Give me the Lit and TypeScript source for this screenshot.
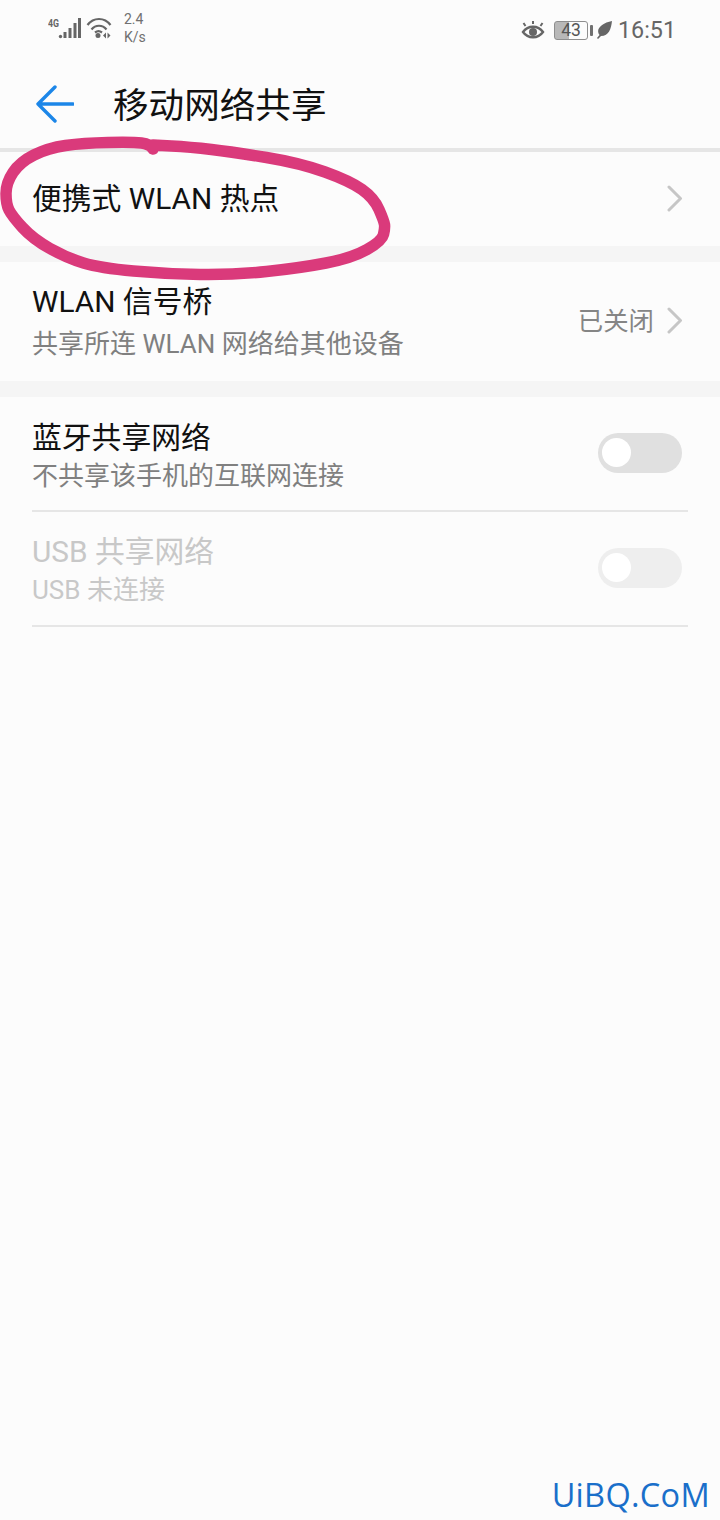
import { LitElement, html, css, svg } from "lit";
import { customElement } from "lit/decorators.js";

const chevron = html`<svg class="chev" width="16" height="27" viewBox="0 0 16 27"><path d="M2 2 L13.500 13.500 L2 25" fill="none" stroke="#c6c6c6" stroke-width="3" stroke-linecap="round" stroke-linejoin="round"/></svg>`;

const toggle = (off: boolean) => html`<div class="track ${off ? "off" : ""}"><div class="knob"></div></div>`;

const inkPoints: [number, number][] = [
  [153, 149], [150, 144], [133, 142], [83, 143], [48, 148], [20, 162], [6, 183], [6, 204], [12, 216],
  [33, 239], [67, 258], [100, 268], [167, 274], [233, 275], [300, 268], [352, 258], [382, 241],
  [385, 228], [384, 221], [374, 198], [350, 181], [300, 163], [233, 152], [190, 147], [153, 145],
];

function smooth(pts: [number, number][]): string {
  let d = `M${pts[0][0]} ${pts[0][1]}`;
  for (let i = 1; i < pts.length - 1; i++) {
    const mx = (pts[i][0] + pts[i + 1][0]) / 2;
    const my = (pts[i][1] + pts[i + 1][1]) / 2;
    d += ` Q${pts[i][0]} ${pts[i][1]} ${mx} ${my}`;
  }
  const last = pts[pts.length - 1];
  return d + ` L${last[0]} ${last[1]}`;
}

@customElement("app-root")
export class AppRoot extends LitElement {
  static styles = css`
    :host { display: block; position: relative; width: 720px; height: 1520px; overflow: hidden; background: #fcfcfc;
      font-family: Roboto, "Noto Sans CJK SC", sans-serif; color: #000; }
    .status { height: 60px; box-sizing: border-box; display: flex; align-items: flex-start; padding: 12px 44px 0 48px; color: #666; }
    .status svg { display: block; flex: none; }
    .speed { margin: -2px 0 0 11px; font-size: 14px; line-height: 18px; color: #707070; width: 30px; }
    .speed div { height: 18px; }
    .spacer { flex: 1; }
    .right { display: flex; align-items: center; height: 34px; margin-top: 1px; }
    .batt { width: 32px; height: 17px; border: 1.5px solid #8e8e8e; border-radius: 3px; margin-left: 9px; background: linear-gradient(90deg, #b8b8b8 0 45%, transparent 45%); font-size: 17.5px; line-height: 17px; text-align: center; color: #555; }
    .tip { width: 3px; height: 11px; background: #707070; margin: 0 3px 0 2px; border-radius: 1px; }
    .time { font-size: 23.3px; color: #666; margin-left: 5px; line-height: 34px; }
    .bar { height: 88px; display: flex; align-items: center; padding-left: 36px; border-bottom: 4px solid #e6e6e6; }
    .bar svg { flex: none; }
    h1 { margin: 4px 0 0 39px; font-size: 35.6px; font-weight: 400; line-height: 48px; color: #111; }
    .row { display: flex; align-items: center; padding: 0 37px 0 32px; box-sizing: border-box; }
    .main { flex: 1; min-width: 0; }
    .title { font-size: 29.8px; line-height: 40px; color: #111; }
    .sub { font-size: 26px; line-height: 36px; color: #808080; }
    .value { font-size: 25.4px; color: #858585; margin: -5px 13px 0 0; }
    .hot { height: 94px; }
    .hot .chev { margin-top: -1px; }
    .bridge { height: 119px; }
    .bridge .sub { margin-top: 4px; }
    .bridge .chev { margin-top: -3px; }
    .gap { height: 16px; background: #f5f5f5; }
    .sw { height: 113px; padding-right: 38px; }
    .sw .main { margin-top: 4px; }
    .sw.dis .main { margin-top: 2px; }
    .line { height: 2px; margin: 0 32px; background: #e6e6e6; }
    .dis .title, .dis .sub { color: #c8c8c8; }
    .track { width: 84px; height: 40px; border-radius: 20px; background: #e0e0e0; position: relative; flex: none; margin-top: -2px; }
    .track.off { background: #eeeeee; }
    .knob { position: absolute; left: 4px; top: 5px; width: 29px; height: 29px; border-radius: 50%; background: #fff; }
    .ink { position: absolute; left: 0; top: 0; pointer-events: none; }
    .mark { position: absolute; right: 10px; bottom: 3px; font-family: "Open Sans", sans-serif; font-size: 32.5px; font-weight: 500; line-height: 44px; color: #1a6fca; letter-spacing: 0.3px; }
  `;

  render() {
    return html`
      <div class="status">
        <svg width="65" height="30" viewBox="0 0 65 30">
          <text x="0" y="15" font-family="Roboto, sans-serif" font-size="11.500" font-weight="700" fill="#666" textLength="11" lengthAdjust="spacingAndGlyphs">4G</text>
          <circle cx="12.500" cy="24.500" r="1.700" fill="#666"/>
          ${[[15.5, 20, 3, 6], [20.5, 16, 3, 10], [25.5, 11, 3, 15], [30, 6, 3, 20]].map(
            ([x, y, w, h]) => svg`<rect x=${x} y=${y} width=${w} height=${h} fill="#666"/>`
          )}
          <g fill="none" stroke="#666" stroke-width="2.200">
            <path d="M39.500 13 C45.500 5 56.500 5 62.500 13"/>
            <path d="M43.500 17.500 C47.500 12.500 54.500 12.500 58.500 17.500"/>
            <path d="M47 20.500 C49 19 52 19 54 20.500"/>
          </g>
          <circle cx="50" cy="23.500" r="2.500" fill="#666"/>
          <path d="M58 20.500 L55 23.500 L58 26.500Z M59.500 20.500 L62.500 23.500 L59.500 26.500Z" fill="#666"/>
        </svg>
        <div class="speed"><div>2.4</div><div>K/s</div></div>
        <div class="spacer"></div>
        <div class="right">
          <svg width="24" height="20" viewBox="0 0 24 20">
            <path d="M2 12 C7 5 17 5 22 12 C17 19 7 19 2 12Z" fill="none" stroke="#666" stroke-width="2.400"/>
            <circle cx="12" cy="12" r="4" fill="#666"/>
            <path d="M4.500 6 L2.500 3 M12 4 L12 1 M19.500 6 L21.500 3" stroke="#666" stroke-width="2"/>
          </svg>
          <div class="batt">43</div>
          <div class="tip"></div>
          <svg width="17" height="18" viewBox="0 0 17 18"><path d="M16 0 C15 8 13 15 5 15 L2 18 L1 17 L3.500 14 C-1 8 6 2 16 0Z" fill="#666"/></svg>
          <div class="time">16:51</div>
        </div>
      </div>

      <div class="bar">
        <svg width="38" height="38" viewBox="0 0 38 38"><path d="M19 2 L2 19 L19 36 M2 19 L37 19" fill="none" stroke="#1c86e8" stroke-width="3.400" stroke-linecap="round" stroke-linejoin="round"/></svg>
        <h1>移动网络共享</h1>
      </div>

      <div class="row hot">
        <div class="main"><div class="title">便携式 WLAN 热点</div></div>
        ${chevron}
      </div>
      <div class="gap"></div>
      <div class="row bridge">
        <div class="main">
          <div class="title">WLAN 信号桥</div>
          <div class="sub">共享所连 WLAN 网络给其他设备</div>
        </div>
        <div class="value">已关闭</div>
        ${chevron}
      </div>
      <div class="gap"></div>
      <div class="row sw">
        <div class="main">
          <div class="title">蓝牙共享网络</div>
          <div class="sub">不共享该手机的互联网连接</div>
        </div>
        ${toggle(false)}
      </div>
      <div class="line"></div>
      <div class="row sw dis">
        <div class="main">
          <div class="title">USB 共享网络</div>
          <div class="sub">USB 未连接</div>
        </div>
        ${toggle(true)}
      </div>
      <div class="line"></div>

      <svg class="ink" width="720" height="300" viewBox="0 0 720 300">
        <path d=${smooth(inkPoints)} fill="none" stroke="#da3a7b" stroke-width="11.500" stroke-linecap="round" stroke-linejoin="round"/>
      </svg>
      <div class="mark">UiBQ.CoM</div>
    `;
  }
}
